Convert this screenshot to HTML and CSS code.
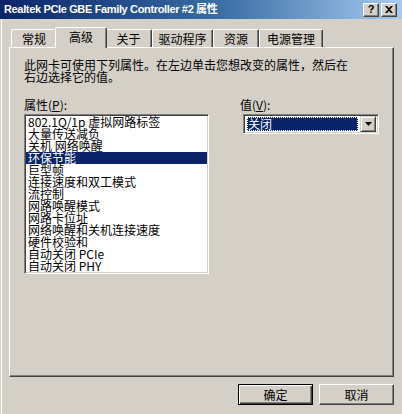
FILE: index.html
```html
<!DOCTYPE html>
<html lang="zh-CN">

<head>
    <meta charset="UTF-8">
    <meta name="viewport" content="width=device-width, initial-scale=1.0">
    <title>Realtek PCIe GBE Family Controller #2 属性</title>
    <link rel="stylesheet" href="styles.css">
</head>

<body>
    <div class="dialog">
        <div class="titlebar">
            <span class="title">Realtek PCIe GBE Family Controller #2 属性</span>
            <div class="caption-btns">
                <span class="cap-btn">?</span>
                <span class="cap-btn close">
                    <svg width="8" height="7" viewBox="0 0 8 7"><path d="M0 0h2l2 2 2-2h2L5 3.5 8 7H6L4 5 2 7H0l3-3.5z" fill="#000"/></svg>
                </span>
            </div>
        </div>

        <div class="client">
            <ul class="tabs">
                <li class="tab t1">常规</li>
                <li class="tab t2 active">高级</li>
                <li class="tab t3">关于</li>
                <li class="tab t4">驱动程序</li>
                <li class="tab t5">资源</li>
                <li class="tab t6">电源管理</li>
            </ul>

            <div class="panel">
                <p class="intro">此网卡可使用下列属性。在左边单击您想改变的属性，然后在<br>右边选择它的值。</p>
                <div class="cols">
                    <div class="col-left">
                        <div class="label">属性(<u>P</u>):</div>
                        <ul class="listbox">
                            <li>802.1Q/1p 虚拟网路标签</li>
                            <li>大量传送减负</li>
                            <li>关机 网络唤醒</li>
                            <li class="sel">环保节能</li>
                            <li>巨型帧</li>
                            <li>连接速度和双工模式</li>
                            <li>流控制</li>
                            <li>网路唤醒模式</li>
                            <li>网路卡位址</li>
                            <li>网络唤醒和关机连接速度</li>
                            <li>硬件校验和</li>
                            <li>自动关闭 PCIe</li>
                            <li>自动关闭 PHY</li>
                        </ul>
                    </div>
                    <div class="col-right">
                        <div class="label">值(<u>V</u>):</div>
                        <div class="combo">
                            <span class="combo-value">关闭</span>
                            <span class="combo-btn">
                                <svg width="7" height="4" viewBox="0 0 7 4"><path d="M0 0h7L3.5 4z" fill="#000"/></svg>
                            </span>
                        </div>
                    </div>
                </div>
            </div>

            <div class="footer">
                <button class="btn default">确定</button>
                <button class="btn">取消</button>
            </div>
        </div>
    </div>
</body>

</html>
```

FILE: styles.css
```css
* {
    padding: 0;
    margin: 0;
    box-sizing: border-box;
}

html,
body {
    width: 402px;
    height: 414px;
    overflow: hidden;
}

body {
    background: #d4d0c8;
    font: 12px/12px "Noto Sans CJK SC", "Liberation Sans", sans-serif;
    color: #000;
}

.dialog {
    height: 100%;
}

/* title bar */
.titlebar {
    height: 19px;
    display: flex;
    align-items: center;
    justify-content: space-between;
    padding: 0 5px 0 4px;
    background: linear-gradient(to right, #0a246a, #3a6ea5 55%, #a6caf0);
}

.title {
    font: bold 11px/13px "Liberation Sans", "Noto Sans CJK SC", sans-serif;
    letter-spacing: -0.35px;
    color: #fff;
}

.caption-btns {
    display: flex;
    gap: 2px;
}

.cap-btn {
    width: 16px;
    height: 14px;
    display: flex;
    justify-content: center;
    align-items: center;
    background: #d4d0c8;
    border-top: 1px solid #fff;
    border-left: 1px solid #fff;
    border-right: 1px solid #404040;
    border-bottom: 1px solid #404040;
    box-shadow: inset -1px -1px #808080;
    font: bold 11px/11px "Liberation Sans", sans-serif;
}

/* window frame under the caption */
.client {
    height: 395px;
    box-shadow: inset 1px 0 #d4d0c8, inset 2px 0 #fff;
}

/* tabs */
.tabs {
    list-style: none;
    display: flex;
    align-items: flex-end;
    height: 28px;
    padding-left: 11px;
    position: relative;
    z-index: 1;
}

.tab {
    height: 18px;
    display: flex;
    justify-content: center;
    align-items: center;
    padding-top: 1px;
    background: #d4d0c8;
    border-top: 1px solid #fff;
    border-left: 1px solid #fff;
    border-right: 1px solid #404040;
    border-radius: 2px 2px 0 0;
    box-shadow: inset -1px 0 #808080;
}

.t1 { width: 46px; }
.t2 { width: 48px; }
.t3 { width: 47px; }
.t4 { width: 61px; }
.t5 { width: 46px; }
.t6 { width: 64px; }

.tab.active {
    width: 52px;
    height: 21px;
    margin: 0 -2px -1px;
    padding-top: 0;
    padding-bottom: 2px;
    position: relative;
    z-index: 2;
}

/* property page */
.panel {
    height: 330px;
    margin: 0 8px 0 9px;
    padding: 11px 0 0 14px;
    border-top: 1px solid #fff;
    border-left: 1px solid #fff;
    border-right: 1px solid #404040;
    border-bottom: 1px solid #404040;
    box-shadow: inset -1px -1px #808080;
}

.intro {
    line-height: 12px;
}

.cols {
    display: flex;
    margin-top: 16px;
}

.col-left {
    width: 185px;
}

.col-right {
    margin-left: 31px;
}

.label {
    height: 15px;
    line-height: 12px;
}

.listbox {
    list-style: none;
    height: 160px;
    background: #fff;
    border-top: 1px solid #808080;
    border-left: 1px solid #808080;
    border-right: 1px solid #fff;
    border-bottom: 1px solid #fff;
    box-shadow: inset 1px 1px #404040, inset -1px -1px #d4d0c8;
    padding: 1px;
}

.listbox li {
    height: 12px;
    line-height: 12px;
    padding-left: 2px;
    white-space: nowrap;
}

.listbox li.sel {
    background: #0a246a;
    color: #fff;
}

.combo {
    width: 136px;
    height: 20px;
    margin-left: 3px;
    display: flex;
    align-items: center;
    background: #fff;
    border-top: 1px solid #808080;
    border-left: 1px solid #808080;
    border-right: 1px solid #fff;
    border-bottom: 1px solid #fff;
    box-shadow: inset 1px 1px #404040, inset -1px -1px #d4d0c8;
    padding: 2px 2px 2px 3px;
}

.combo-value {
    flex: 1;
    height: 14px;
    margin-right: 2px;
    padding-left: 1px;
    line-height: 13px;
    color: #fff;
    background: #0a246a;
    outline: 1px dotted #fff;
    outline-offset: -1px;
}

.combo-btn {
    width: 16px;
    height: 16px;
    display: flex;
    justify-content: center;
    align-items: center;
    background: #d4d0c8;
    border-top: 1px solid #d4d0c8;
    border-left: 1px solid #d4d0c8;
    border-right: 1px solid #404040;
    border-bottom: 1px solid #404040;
    box-shadow: inset 1px 1px #fff, inset -1px -1px #808080;
}

/* buttons */
.footer {
    display: flex;
    justify-content: flex-end;
    gap: 6px;
    padding: 7px 8px 0 0;
}

.btn {
    width: 75px;
    height: 21px;
    font: 12px/12px "Noto Sans CJK SC", sans-serif;
    color: #000;
    background: #d4d0c8;
    border-top: 1px solid #fff;
    border-left: 1px solid #fff;
    border-right: 1px solid #404040;
    border-bottom: 1px solid #404040;
    box-shadow: inset -1px -1px #808080;
}

.btn.default {
    border: 1px solid #000;
    box-shadow: inset 1px 1px #fff, inset -1px -1px #404040, inset -2px -2px #808080;
}
```
